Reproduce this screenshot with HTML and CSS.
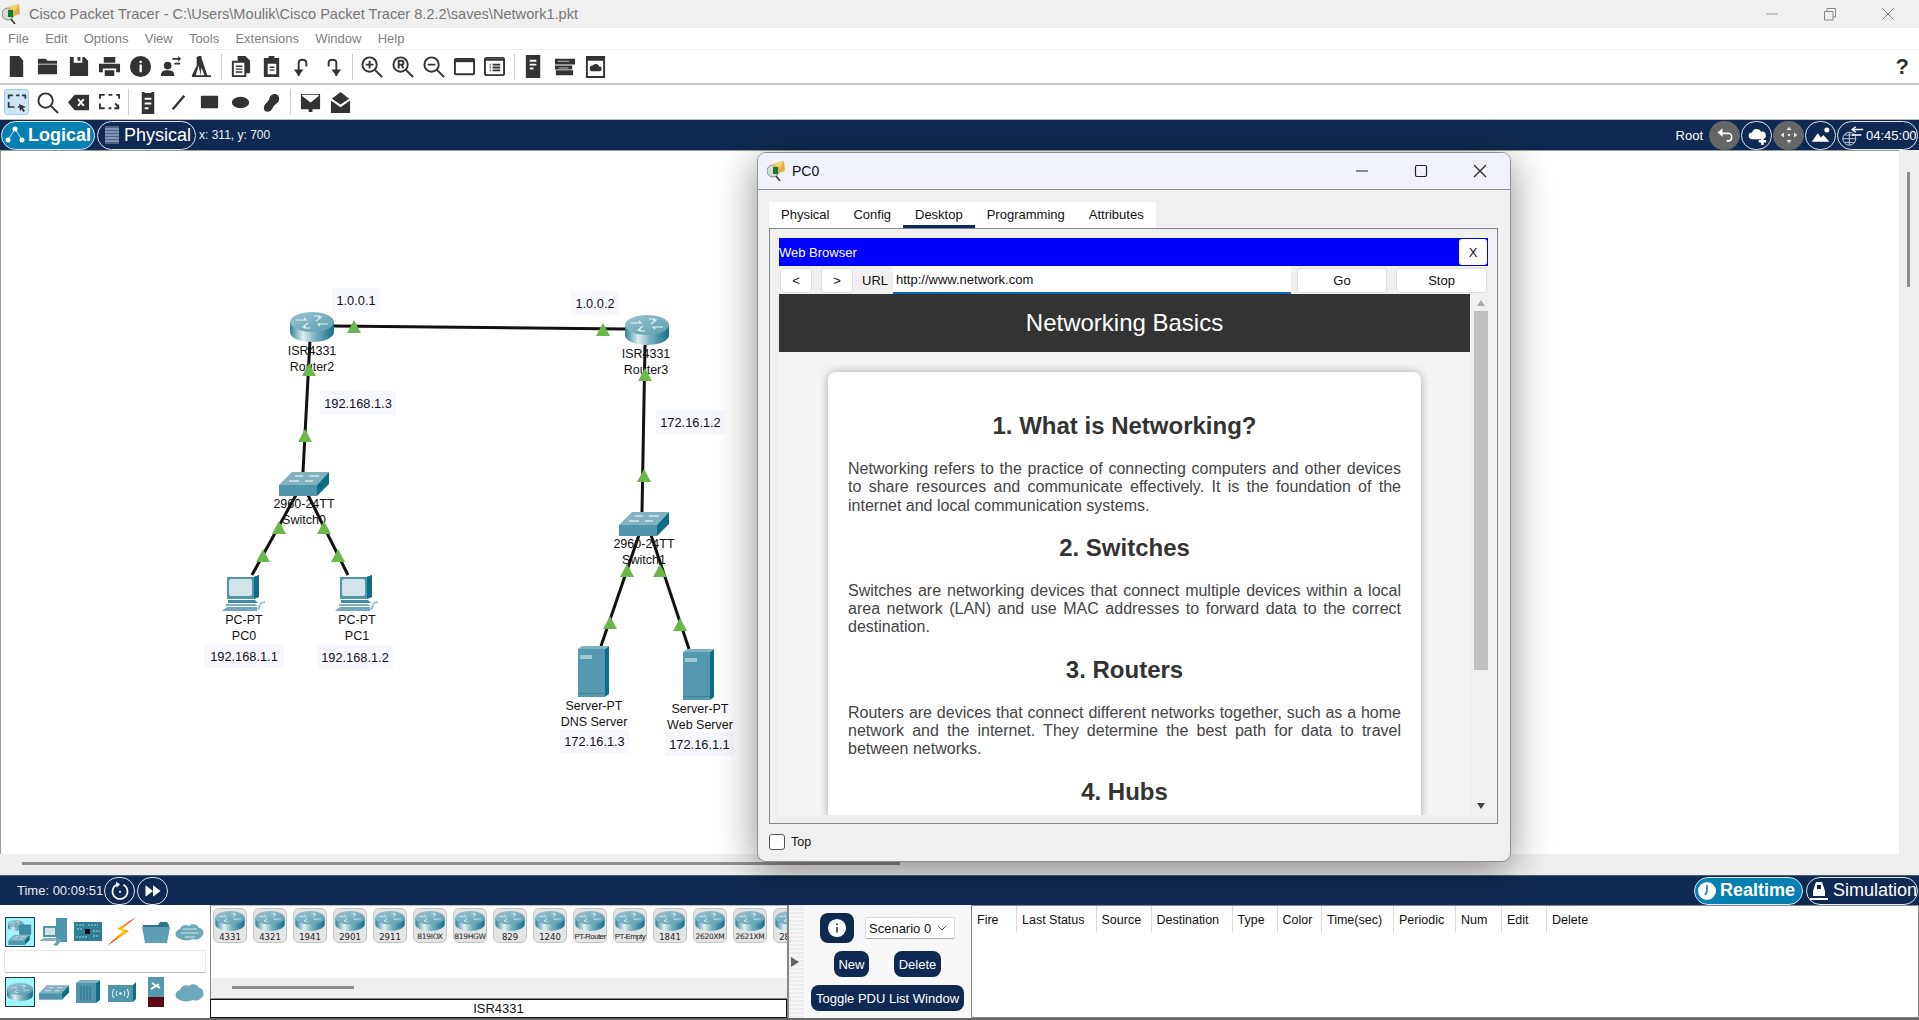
FILE: index.html
```html
<!DOCTYPE html>
<html lang="en">
<head>
<meta charset="utf-8">
<title>Cisco Packet Tracer</title>
<link rel="stylesheet" href="styles.css">
</head>
<body>
<svg class="defs" aria-hidden="true">
  <defs>
    <linearGradient id="gCyl" x1="0" x2="1" y1="0" y2="0">
      <stop offset="0" stop-color="#2f8197"/><stop offset=".3" stop-color="#dfeef1"/><stop offset=".55" stop-color="#7fb3c2"/><stop offset="1" stop-color="#146f8a"/>
    </linearGradient>
    <linearGradient id="gTop" x1="0" x2="1" y1="0" y2="1">
      <stop offset="0" stop-color="#9cc4d0"/><stop offset="1" stop-color="#5a9db1"/>
    </linearGradient>
    <radialGradient id="gBolt"><stop offset="0" stop-color="#ffe000"/><stop offset=".6" stop-color="#ff7a00"/><stop offset="1" stop-color="#e81c00"/></radialGradient>
    <symbol id="router" viewBox="0 0 44 30">
      <path d="M0 10V20C0 26 10 30 22 30S44 26 44 20V10Z" fill="url(#gCyl)"/>
      <ellipse cx="22" cy="10" rx="22" ry="10" fill="url(#gTop)"/>
      <path d="M6 8h10l-2-2M38 12H28l2 2M26 9l5-4h-3M18 11l-5 4h3M24 4l6 0M14 16l6 0" fill="none" stroke="#e6f1f4" stroke-width="1.100"/>
    </symbol>
    <symbol id="switch" viewBox="0 0 50 24">
      <polygon points="0,13 13,0 50,0 38,13" fill="#82b2c2"/>
      <rect x="0" y="13" width="38" height="11" fill="#4f96ad"/>
      <polygon points="38,13 50,0 50,12 38,24" fill="#0f6d88"/>
      <path d="M16 4h8M30 4h10M10 9h10M26 9h8" stroke="#fff" stroke-width="1"/>
    </symbol>
    <symbol id="pc" viewBox="0 0 44 36">
      <polygon points="5,2 32,2 37,0 37,22 31,24 5,24" fill="#4f96ad"/>
      <polygon points="32,2 37,0 37,22 32,24" fill="#0f6d88"/>
      <rect x="7" y="4" width="23" height="17" rx="2" fill="#d3e3ea"/>
      <polygon points="6,25 33,25 36,28 6,28" fill="#3f8aa2"/>
      <polygon points="4,29 33,29 36,31 4,31" fill="#7fb1c2"/>
      <polygon points="0,36 5,32 35,32 35,36" fill="#6ea8bb"/>
      <path d="M36 35l3-7 4-1" fill="none" stroke="#9fc4d0" stroke-width="2"/>
    </symbol>
    <symbol id="server" viewBox="0 0 31 51">
      <rect x="0" y="3" width="27" height="48" fill="#5499b0"/>
      <polygon points="27,3 31,0 31,48 27,51" fill="#0f6d88"/>
      <polygon points="0,3 4,0 31,0 27,3" fill="#7fb1c2"/>
      <rect x="2" y="9" width="12" height="4" fill="#a3c7d3"/>
      <rect x="0" y="47" width="27" height="1" fill="#3f8298"/>
    </symbol>
    <symbol id="tri" viewBox="0 0 14 13"><polygon points="7,0 14,13 0,13" fill="#6ab84a"/></symbol>
    <symbol id="logo" viewBox="0 0 18 20">
      <circle cx="6" cy="10" r="6" fill="#d8d8d8" stroke="#888"/>
      <path d="M9 15l4 5" stroke="#333" stroke-width="1.600"/>
      <path d="M6 3l11-3 1 10-9 3Z" fill="#e2b043"/>
      <path d="M6 3l7 4 4-7Z" fill="#f1d27a"/>
      <rect x="6" y="6" width="5" height="7" fill="#167a2c"/>
    </symbol>
  </defs>
</svg>

<div class="app">
  <header class="titlebar">
    <svg class="title-logo"><use href="#logo"/></svg>
    <span class="title-text">Cisco Packet Tracer - C:\Users\Moulik\Cisco Packet Tracer 8.2.2\saves\Network1.pkt</span>
    <div class="win-ctrls">
      <svg class="wc" viewBox="0 0 14 14"><path d="M1 7h12" stroke="#999" fill="none"/></svg>
      <svg class="wc" viewBox="0 0 14 14"><path d="M1.500 4.500h8.500v8.500h-8.500zM4 4V1.500h8.500V10H10" stroke="#888" fill="none"/></svg>
      <svg class="wc" viewBox="0 0 14 14"><path d="M1 1l12 12M13 1L1 13" stroke="#888" fill="none"/></svg>
    </div>
  </header>

  <nav class="menubar">
    <span>File</span><span>Edit</span><span>Options</span><span>View</span><span>Tools</span><span>Extensions</span><span>Window</span><span>Help</span>
  </nav>

  <div class="toolbar tb-main">
    <span class="tool"><svg viewBox="0 0 24 24"><path d="M5 1h10l4 5v17H5z"/></svg></span>
    <span class="tool"><svg viewBox="0 0 24 24"><path d="M2 4h8l2 2h10v3H2zM2 10h20v10H2z"/></svg></span>
    <span class="tool"><svg viewBox="0 0 24 24"><path d="M3 2h4v6h9V2h2l4 4v16H3zM11 2h3v4h-3z"/></svg></span>
    <span class="tool"><svg viewBox="0 0 24 24"><path d="M6 2h12v6H6zM1 9h22v9h-4v-4H5v4H1zM7 16h10v6H7z"/></svg></span>
    <span class="tool"><svg viewBox="0 0 24 24"><path fill-rule="evenodd" d="M12 1a11 11 0 1 0 0 22a11 11 0 0 0 0-22zM11 6h2.400v2.400H11zM11 10h2.400v8H11z"/></svg></span>
    <span class="tool"><svg viewBox="0 0 24 24"><circle cx="9" cy="11" r="4"/><path d="M2 22c0-5 3-6 7-6s7 1 7 6zM14 3h6V1l3 3-3 3V5h-6zM16 8h6v2h-6z"/></svg></span>
    <span class="tool"><svg viewBox="0 0 24 24"><path d="M9 1h3v2l6 18h4v2H2v-2l5-10V3H6zM9 11l-3 10h5zM15 21l-3-8-1 8z" fill-rule="evenodd"/></svg></span>
    <i class="sep"></i>
    <span class="tool"><svg viewBox="0 0 24 24"><path d="M9 1h8l5 5v13h-4v4H3V6h6zM5 8v13h11V8zM7 11h7v1.500H7zM7 14h7v1.500H7zM7 17h7v1.500H7z" fill-rule="evenodd"/></svg></span>
    <span class="tool"><svg viewBox="0 0 24 24"><path d="M9 1h6v2h5v20H4V3h5zM8 9v11h9V9zM10 12h5v1.500h-5zM10 15h5v1.500h-5z" fill-rule="evenodd"/></svg></span>
    <span class="tool"><svg viewBox="0 0 24 24"><path d="M8 22V8c0-4 8-4 8 0v4" fill="none" stroke="#333" stroke-width="2"/><path d="M3 15h10l-5 7z"/></svg></span>
    <span class="tool"><svg viewBox="0 0 24 24"><path d="M16 22V8c0-4-8-4-8 0v4" fill="none" stroke="#333" stroke-width="2"/><path d="M11 15h10l-5 7z"/></svg></span>
    <i class="sep"></i>
    <span class="tool"><svg viewBox="0 0 24 24" class="ln"><circle cx="10" cy="10" r="7.500"/><path d="M15 15l8 8M6 10h8M10 6v8"/></svg></span>
    <span class="tool"><svg viewBox="0 0 24 24" class="ln"><circle cx="10" cy="10" r="7.500"/><path d="M15 15l8 8M8 14V6h3a2 2 0 0 1 0 4H8M11 10l2 4"/></svg></span>
    <span class="tool"><svg viewBox="0 0 24 24" class="ln"><circle cx="10" cy="10" r="7.500"/><path d="M15 15l8 8M6 10h8"/></svg></span>
    <span class="tool"><svg viewBox="0 0 24 24" class="ln"><rect x="2" y="4" width="20" height="16" rx="1" stroke-width="2"/><path d="M2 6h20" stroke-width="3"/></svg></span>
    <span class="tool"><svg viewBox="0 0 24 24" class="ln"><rect x="2" y="3" width="20" height="18" rx="2"/><path d="M2 5h20M7 10h1M10 10h8M7 13h1M10 13h8M7 16h1M10 16h8"/></svg></span>
    <i class="sep"></i>
    <span class="tool"><svg viewBox="0 0 24 24"><path d="M4 0h15v24H4zM8 5h7v2H8zM8 9h7v2H8zM8 13h4v2H8z" fill-rule="evenodd"/></svg></span>
    <span class="tool"><svg viewBox="0 0 24 24"><path d="M2 4h21v6H2zM2 11h18v4H2zM3 16h18v5H3z"/><path d="M5 6h12v1H5zM6 13h10v1H6z" fill="#bbb"/></svg></span>
    <span class="tool"><svg viewBox="0 0 24 24"><path fill-rule="evenodd" d="M2 1h20v23H2zM4 6v16h16V6zM9 17a3 3 0 0 1 0-6a4 4 0 0 1 7 1a2.500 2.500 0 0 1 0 5z"/></svg></span>
    <span class="help">?</span>
  </div>

  <div class="toolbar tb-sub">
    <span class="tool on"><svg viewBox="0 0 24 24" class="ln"><path d="M2 8V4h5M11 4h4M18 4h4v4M2 12v6h7M13 18h2" stroke-width="2"/></svg><svg class="mini" viewBox="0 0 8 8"><path d="M0 0l7 3-3 1 2 3-2 1-1-3-2 2z"/></svg></span>
    <span class="tool"><svg viewBox="0 0 24 24" class="ln"><circle cx="10" cy="10" r="7.500"/><path d="M15 15l8 8"/></svg></span>
    <span class="tool"><svg viewBox="0 0 24 24"><path fill-rule="evenodd" d="M8 4h15v16H8L1 12z"/><path d="M11.500 8.500l6 7M17.500 8.500l-6 7" stroke="#fff" stroke-width="2"/></svg></span>
    <span class="tool"><svg viewBox="0 0 24 24" class="ln"><path d="M2 8V4h5M11 4h4M19 4h3v4M2 13v5h5M11 18h3M18 13l4 5M21 14v4h-4" stroke-width="2"/></svg></span>
    <i class="sep"></i>
    <span class="tool"><svg viewBox="0 0 24 24"><path d="M5 1h3v1h7V1h3v23H5zM8 7h7v2H8zM8 12h7v2H8zM8 17h4v2H8z" fill-rule="evenodd"/></svg></span>
    <span class="tool"><svg viewBox="0 0 24 24" class="ln"><path d="M6 19L18 5" stroke-width="2.500"/></svg></span>
    <span class="tool"><svg viewBox="0 0 24 24"><rect x="3" y="5" width="18" height="13" rx="1"/></svg></span>
    <span class="tool"><svg viewBox="0 0 24 24"><ellipse cx="12" cy="12" rx="9" ry="6"/></svg></span>
    <span class="tool"><svg viewBox="0 0 24 24"><path d="M4 18c0-5 5-6 6-11 1-5 10-6 10 1 0 5-5 5-7 10-2 5-9 5-9 0z"/></svg></span>
    <i class="sep"></i>
    <span class="tool"><svg viewBox="0 0 24 24"><path fill-rule="evenodd" d="M2 3h20v16h-8v3h-4v-3H2zM3 5l9 7 9-7-1-1H4z"/></svg></span>
    <span class="tool"><svg viewBox="0 0 24 24"><path d="M12 1l9 7-9 6-9-6zM2 10l10 7 10-7v13H2z"/></svg></span>
  </div>

  <div class="navbar">
    <span class="pill pill-on pill-logical">
      <svg class="pill-ic" viewBox="0 0 22 22"><path d="M11 5L4 16M11 5l7 11" stroke="#cfe6f0" fill="none"/><circle cx="11" cy="5" r="2.500" fill="#fff"/><circle cx="4" cy="16" r="2.500" fill="#fff"/><circle cx="18" cy="16" r="2.500" fill="#fff"/></svg>Logical
    </span>
    <span class="pill pill-physical">
      <svg class="pill-ic pill-ic-rack" viewBox="0 0 14 18"><rect x="0" y="0" width="14" height="18" fill="#4d648a"/><path d="M0 3h14M0 6h14M0 9h14M0 12h14M0 15h14" stroke="#b9c6da"/></svg>Physical
    </span>
    <span class="coords">x: 311, y: 700</span>
    <div class="nav-right">
      <span class="root">Root</span>
      <span class="rnd rnd-grey"><svg viewBox="0 0 24 24"><path d="M9 4L3 9l6 5v-3h8c3 0 3 7-1 7h-2v2h3c5 0 6-11-1-11H9z" fill="#fff"/></svg></span>
      <span class="rnd"><svg viewBox="0 0 24 24"><path d="M6 17a4 4 0 0 1 0-8a6 6 0 0 1 11-1a4.500 4.500 0 0 1 2 9zM17 15h3v3h3v3h-3v3h-3v-3h-3v-3h3z" fill="#fff"/></svg></span>
      <span class="rnd rnd-grey"><svg viewBox="0 0 24 24"><path d="M12 2l3 4H9zM12 22l-3-4h6zM2 12l4-3v6zM22 12l-4 3V9z" fill="#e8e8e8"/><circle cx="12" cy="12" r="1.500" fill="#e8e8e8"/></svg></span>
      <span class="rnd"><svg viewBox="0 0 24 24"><path d="M1 20l7-10 4 5 3-3 7 8z" fill="#fff"/><circle cx="19" cy="6" r="3" fill="#fff"/></svg></span>
      <span class="rnd rnd-clock"><svg viewBox="0 0 26 26"><circle cx="9" cy="17" r="7" fill="none" stroke="#cdd6e4"/><path d="M2 17h14M9 10v14M4 13h10M4 21h10" stroke="#cdd6e4" fill="none"/><path d="M12 7h12M16 4l-4 3 4 3M12 13h10" stroke="#fff" stroke-width="1.500" fill="none"/></svg>04:45:00</span>
    </div>
  </div>

  <main class="canvas-row">
    <div class="canvas">
      <svg class="links" viewBox="0 150 1899 704">
        <g class="wires">
          <path d="M333 326L625 329"/>
          <path d="M310 340L303 472"/>
          <path d="M645 345L642 512"/>
          <path d="M296 495L252 575"/>
          <path d="M308 495L348 575"/>
          <path d="M639 535L601 646"/>
          <path d="M651 535L689 649"/>
        </g>
        <use href="#router" x="290" y="312" width="44" height="30"/>
        <use href="#router" x="625" y="315" width="44" height="30"/>
        <use href="#switch" x="279" y="472" width="50" height="24"/>
        <use href="#switch" x="619" y="512" width="50" height="24"/>
        <use href="#pc" x="222" y="575" width="44" height="36"/>
        <use href="#pc" x="335" y="575" width="44" height="36"/>
        <use href="#server" x="578" y="646" width="31" height="51"/>
        <use href="#server" x="683" y="649" width="31" height="51"/>
      </svg>
      <div class="lbl l-r2">ISR4331<br>Router2</div>
      <div class="lbl l-r3">ISR4331<br>Router3</div>
      <div class="lbl l-s0">2960-24TT<br>Switch0</div>
      <div class="lbl l-s1">2960-24TT<br>Switch1</div>
      <div class="lbl l-pc0">PC-PT<br>PC0</div>
      <div class="lbl l-pc1">PC-PT<br>PC1</div>
      <div class="lbl l-dns">Server-PT<br>DNS Server</div>
      <div class="lbl l-web">Server-PT<br>Web Server</div>
      <div class="ip ip1">1.0.0.1</div>
      <div class="ip ip2">1.0.0.2</div>
      <div class="ip ip3">192.168.1.3</div>
      <div class="ip ip4">172.16.1.2</div>
      <div class="ip ip5">192.168.1.1</div>
      <div class="ip ip6">192.168.1.2</div>
      <div class="ip ip7">172.16.1.3</div>
      <div class="ip ip8">172.16.1.1</div>
      <svg class="links links-top" viewBox="0 150 1899 704">
        <use href="#tri" x="347" y="320" width="14" height="13"/>
        <use href="#tri" x="596" y="323" width="14" height="13"/>
        <use href="#tri" x="302" y="363" width="14" height="13"/>
        <use href="#tri" x="298" y="429" width="14" height="13"/>
        <use href="#tri" x="638" y="368" width="14" height="13"/>
        <use href="#tri" x="637" y="469" width="14" height="13"/>
        <use href="#tri" x="272" y="521" width="14" height="13"/>
        <use href="#tri" x="317" y="521" width="14" height="13"/>
        <use href="#tri" x="256" y="549" width="14" height="13"/>
        <use href="#tri" x="331" y="549" width="14" height="13"/>
        <use href="#tri" x="620" y="564" width="14" height="13"/>
        <use href="#tri" x="653" y="564" width="14" height="13"/>
        <use href="#tri" x="603" y="616" width="14" height="13"/>
        <use href="#tri" x="673" y="618" width="14" height="13"/>
      </svg>
    </div>
    <div class="vscroll"><i></i></div>
  </main>
  <div class="hscroll"><i></i></div>

  <div class="timebar">
    <span class="time">Time: 00:09:51</span>
    <span class="rnd rnd-time"><svg viewBox="0 0 24 24"><path d="M16 4.500A9 9 0 1 1 8 4.500" fill="none" stroke="#fff" stroke-width="2"/><path d="M7 1l5 3-4 4z" fill="#fff"/><circle cx="12" cy="13" r="1.300" fill="#fff"/></svg></span>
    <span class="rnd rnd-time"><svg viewBox="0 0 24 24"><path d="M3 5l9 7-9 7zM12 5l9 7-9 7z" fill="#fff"/></svg></span>
    <div class="mode">
      <span class="pill pill-on pill-rt"><svg viewBox="0 0 22 22" class="pill-ic"><circle cx="11" cy="11" r="9" fill="#fff"/><path d="M11 5v7l-2 3" stroke="#0580b0" stroke-width="1.500" fill="none"/></svg>Realtime</span>
      <span class="pill pill-sim"><svg viewBox="0 0 22 22" class="pill-ic"><path d="M8 2h6l3 9v5H5v-5zM9 5v4h4V5zM2 18h18v2H2z" fill="#fff" fill-rule="evenodd"/></svg>Simulation</span>
    </div>
  </div>

  <section class="dock">
    <div class="cats">
      <div class="cat-row">
        <span class="cat cat-on"><svg viewBox="0 0 30 30"><use href="#router" x="2" y="2" width="17" height="12"/><rect x="14" y="7" width="13" height="11" fill="#3e8ba3"/><use href="#switch" x="2" y="18" width="24" height="11"/></svg></span>
        <span class="cat"><svg viewBox="0 0 30 30"><rect x="17" y="1" width="11" height="24" fill="#4f96ad"/><rect x="4" y="9" width="14" height="11" fill="#4f96ad"/><rect x="6" y="11" width="10" height="7" fill="#d3e3ea"/><polygon points="0,24 5,21 20,21 16,24" fill="#7fb1c2"/><path d="M14 28l6-6 3 1-5 6z" fill="#6ea8bb"/></svg></span>
        <span class="cat"><svg viewBox="0 0 30 30"><rect x="1" y="5" width="28" height="19" fill="#2e7f96"/><rect x="12" y="12" width="5" height="5" fill="#111"/><path d="M3 8h8M15 8h10M3 20h12M20 14h7M4 12h5M20 19h5" stroke="#b7d3dc" stroke-dasharray="2 1"/></svg></span>
        <span class="cat"><svg viewBox="0 0 30 30"><polygon points="29,0 10,12 16,14 0,29 22,14 15,12" fill="url(#gBolt)"/></svg></span>
        <span class="cat"><svg viewBox="0 0 30 30"><path d="M2 8h15l2-3 7 0 2 3v3H2z" fill="#2a7890"/><path d="M1 10h28l-3 16H4z" fill="#5c9eb3"/></svg></span>
        <span class="cat"><svg viewBox="0 0 30 30"><path d="M3 21c-4-2-3-8 2-9 1-4 6-5 9-3 3-3 9-2 10 2 5 0 6 7 2 9-2 3-6 3-8 2-4 2-11 2-15-1z" fill="#6ea8bb"/><path d="M8 12h14M6 16h18M10 20h10" stroke="#d6e6eb"/></svg></span>
      </div>
      <div class="search"></div>
      <div class="cat-row">
        <span class="cat cat-on"><svg viewBox="0 0 30 30"><use href="#router" x="1" y="5" width="28" height="20"/></svg></span>
        <span class="cat"><svg viewBox="0 0 30 30"><use href="#switch" x="0" y="8" width="30" height="15"/></svg></span>
        <span class="cat"><svg viewBox="0 0 30 30"><rect x="3" y="6" width="20" height="20" fill="#4f96ad"/><polygon points="23,6 27,3 27,23 23,26" fill="#0f6d88"/><polygon points="3,6 7,3 27,3 23,6" fill="#7fb1c2"/><path d="M8 9v14M11 9v14M14 9v14M17 9v14" stroke="#316f85"/></svg></span>
        <span class="cat"><svg viewBox="0 0 30 30"><rect x="1" y="8" width="25" height="17" fill="#4f96ad"/><polygon points="26,8 29,5 29,22 26,25" fill="#0f6d88"/><path d="M7 12c-2 3-2 6 0 9M20 12c2 3 2 6 0 9M10 14c-1 2-1 3 0 5M17 14c1 2 1 3 0 5" stroke="#fff" fill="none"/><circle cx="13.500" cy="16.500" r="1.300" fill="#fff"/></svg></span>
        <span class="cat"><svg viewBox="0 0 30 30"><rect x="7" y="0" width="16" height="30" fill="#5499b0"/><rect x="7" y="20" width="16" height="10" fill="#5a0a10"/><path d="M11 6l8 5M10 12l8-5" stroke="#fff" stroke-width="2"/></svg></span>
        <span class="cat"><svg viewBox="0 0 30 30"><path d="M3 22c-4-2-3-8 2-9 1-4 6-6 9-4 3-3 9-2 10 2 5 0 6 8 2 10-2 3-6 3-8 2-4 2-11 2-15-1z" fill="#6ea8bb"/></svg></span>
      </div>
    </div>

    <div class="devices">
      <div class="tiles">
        <div class="tile"><svg><use href="#router"/></svg>4331</div>
        <div class="tile"><svg><use href="#router"/></svg>4321</div>
        <div class="tile"><svg><use href="#router"/></svg>1941</div>
        <div class="tile"><svg><use href="#router"/></svg>2901</div>
        <div class="tile"><svg><use href="#router"/></svg>2911</div>
        <div class="tile tile-mid"><svg><use href="#router"/></svg>819IOX</div>
        <div class="tile tile-mid"><svg><use href="#router"/></svg>819HGW</div>
        <div class="tile"><svg><use href="#router"/></svg>829</div>
        <div class="tile"><svg><use href="#router"/></svg>1240</div>
        <div class="tile tile-tight"><svg><use href="#router"/></svg>PT-Router</div>
        <div class="tile tile-tight"><svg><use href="#router"/></svg>PT-Empty</div>
        <div class="tile"><svg><use href="#router"/></svg>1841</div>
        <div class="tile tile-mid"><svg><use href="#router"/></svg>2620XM</div>
        <div class="tile tile-mid"><svg><use href="#router"/></svg>2621XM</div>
        <div class="tile"><svg><use href="#router"/></svg>2811</div>
      </div>
      <div class="dev-scroll"><i></i></div>
      <div class="dev-name">ISR4331</div>
    </div>

    <div class="collapse"><svg viewBox="0 0 8 10"><path d="M0 0l8 5-8 5z" fill="#666"/></svg></div>

    <div class="pdu-ctrl">
      <div class="pdu-row">
        <span class="btn btn-info"><svg viewBox="0 0 22 22"><circle cx="11" cy="11" r="10" fill="#fff"/><path d="M10 6h2v2h-2zM10 10h2v6h-2z" fill="#555"/></svg></span>
        <span class="select">Scenario 0<svg viewBox="0 0 10 6"><path d="M1 1l4 4 4-4" fill="none" stroke="#555"/></svg></span>
      </div>
      <div class="pdu-row pdu-row2">
        <span class="btn btn-new">New</span>
        <span class="btn btn-del">Delete</span>
      </div>
      <span class="btn btn-toggle">Toggle PDU List Window</span>
    </div>

    <div class="pdu-table">
      <span class="th th1">Fire</span><span class="th th2">Last Status</span><span class="th th3">Source</span><span class="th th4">Destination</span><span class="th th5">Type</span><span class="th th6">Color</span><span class="th th7">Time(sec)</span><span class="th th8">Periodic</span><span class="th th9">Num</span><span class="th th10">Edit</span><span class="th th11">Delete</span>
    </div>
  </section>

  <section class="window">
    <div class="w-title">
      <svg class="w-logo"><use href="#logo"/></svg>
      <span class="w-name">PC0</span>
      <div class="w-ctrls">
        <svg viewBox="0 0 14 14"><path d="M1 7h12" stroke="#222" fill="none" stroke-width="1.200"/></svg>
        <svg viewBox="0 0 14 14"><rect x="1.500" y="1.500" width="11" height="11" rx="1.500" stroke="#222" fill="none" stroke-width="1.200"/></svg>
        <svg viewBox="0 0 14 14"><path d="M1 1l12 12M13 1L1 13" stroke="#222" fill="none" stroke-width="1.200"/></svg>
      </div>
    </div>
    <div class="w-body">
      <div class="tabs">
        <span class="tab">Physical</span><span class="tab">Config</span><span class="tab tab-on">Desktop</span><span class="tab">Programming</span><span class="tab">Attributes</span>
      </div>
      <div class="panel">
        <div class="browser-head"><span>Web Browser</span><span class="xbtn">X</span></div>
        <div class="url-row">
          <span class="ubtn ubtn-nav">&lt;</span>
          <span class="ubtn ubtn-nav">&gt;</span>
          <span class="url-lbl">URL</span>
          <span class="url-input">http://www.network.com</span>
          <span class="ubtn ubtn-go">Go</span>
          <span class="ubtn ubtn-stop">Stop</span>
        </div>
        <div class="page-wrap">
          <div class="page">
            <div class="page-head">Networking Basics</div>
            <article class="card">
              <h2>1. What is Networking?</h2>
              <p>Networking refers to the practice of connecting computers and other devices to share resources and communicate effectively. It is the foundation of the internet and local communication systems.</p>
              <h2>2. Switches</h2>
              <p>Switches are networking devices that connect multiple devices within a local area network (LAN) and use MAC addresses to forward data to the correct destination.</p>
              <h2>3. Routers</h2>
              <p>Routers are devices that connect different networks together, such as a home network and the internet. They determine the best path for data to travel between networks.</p>
              <h2>4. Hubs</h2>
            </article>
          </div>
          <div class="page-scroll">
            <svg viewBox="0 0 8 6"><path d="M4 0l4 6H0z" fill="#aaa"/></svg>
            <i></i>
            <svg viewBox="0 0 8 6"><path d="M0 0h8L4 6z" fill="#444"/></svg>
          </div>
        </div>
      </div>
      <div class="w-foot"><span class="check"></span>Top</div>
    </div>
  </section>
</div>
</body>
</html>
```
FILE: styles.css
```css
* { box-sizing: border-box; }
html, body { margin: 0; padding: 0; height: 100%; overflow: hidden; background: #fff; }
body { font-family: "Liberation Sans", Arial, sans-serif; font-size: 13px; color: #111; }
.defs { position: absolute; width: 0; height: 0; }

.app { position: relative; width: 1919px; height: 1020px; display: flex; flex-direction: column; overflow: hidden; background: #fff; }

/* title bar */
.titlebar { height: 28px; background: #f0f0f0; display: flex; align-items: center; padding-left: 2px; flex: none; }
.title-logo { width: 18px; height: 20px; margin-right: 9px; }
.title-text { font-size: 14.600px; color: #777; white-space: nowrap; }
.win-ctrls { margin-left: auto; display: flex; gap: 44px; padding-right: 24px; }
.wc { width: 14px; height: 14px; }

/* menu */
.menubar { height: 22px; background: #fff; display: flex; align-items: center; gap: 16.200px; padding-left: 8px; border-bottom: 1px solid #eee; color: #808080; flex: none; }

/* toolbars */
.toolbar { display: flex; align-items: center; padding-left: 1.600px; background: #fff; flex: none; }
.tb-main { height: 35px; border-bottom: 2px solid #c8c8c8; }
.tb-sub { height: 35px; border-bottom: 1px solid #bbb; }
.tool { width: 30.800px; height: 26px; display: flex; align-items: center; justify-content: center; position: relative; flex: none; }
.tool svg { width: 23px; height: 23px; fill: #333; }
.tool svg.ln { fill: none; stroke: #333; stroke-width: 2; }
.tool.on { background: #cde6f7; border: 1px solid #9fd0f0; border-radius: 3px; width: 25px; margin: 0 2.900px; }
.tool.on svg.ln { width: 20px; height: 20px; }
.tool svg.mini { position: absolute; right: 1px; bottom: 2px; width: 8px; height: 8px; }
.sep { width: 8px; height: 26px; flex: none; background: linear-gradient(#ccc, #ccc) center / 1px 100% no-repeat; }
.help { margin-left: auto; margin-right: 10px; font-size: 22px; font-weight: bold; color: #333; }

/* nav bars */
.navbar, .timebar { background: #0f2a52; display: flex; align-items: center; flex: none; color: #fff; }
.navbar { height: 30px; }
.pill { height: 29px; border: 1px solid #dfe6ef; border-radius: 15px; display: flex; align-items: center; color: #fff; font-size: 18px; flex: none; white-space: nowrap; }
.pill-on { background: #0580b0; font-weight: bold; }
.pill-logical { width: 94px; margin-left: 1px; }
.pill-physical { width: 99px; margin-left: 2px; }
.pill-ic { width: 22px; height: 22px; flex: none; margin: 0 2px; }
.pill-ic-rack { width: 14px; height: 18px; margin: 0 5px 0 7px; }
.coords { font-size: 12px; margin-left: 3px; color: #eef2f7; }
.nav-right { margin-left: auto; display: flex; align-items: center; gap: 1px; }
.root { font-size: 13px; margin-right: 5px; }
.rnd { width: 31px; height: 29px; border: 1px solid #dfe6ef; border-radius: 15px; display: flex; align-items: center; justify-content: center; flex: none; color: #fff; }
.rnd svg { width: 20px; height: 20px; }
.rnd-grey { background: #666; border-color: #666; }
.rnd-clock { width: 81px; font-size: 13px; justify-content: flex-start; padding-left: 3px; margin-right: 1px; white-space: nowrap; }
.rnd-clock svg { width: 24px; height: 24px; flex: none; margin-right: 1px; }

/* canvas */
.canvas-row { height: 704px; display: flex; flex: none; }
.canvas { position: relative; flex: 1; background: #fff; border-left: 1px solid #999; border-top: 1px solid #999; }
.links { position: absolute; left: -1px; top: -1px; width: 1899px; height: 704px; }
.links-top { pointer-events: none; }
.wires path { stroke: #111; stroke-width: 3; fill: none; }
.lbl { position: absolute; width: 120px; text-align: center; font-size: 12.500px; line-height: 16px; color: #111; }
.l-r2 { left: 251px; top: 192px; }
.l-r3 { left: 585px; top: 195px; }
.l-s0 { left: 243px; top: 345px; }
.l-s1 { left: 583px; top: 385px; }
.l-pc0 { left: 183px; top: 461px; }
.l-pc1 { left: 296px; top: 461px; }
.l-dns { left: 533px; top: 547px; }
.l-web { left: 639px; top: 550px; }
.ip { position: absolute; height: 24px; display: flex; align-items: center; justify-content: center; background: #f7f8fe; font-size: 12.800px; color: #111; }
.ip1 { left: 331px; top: 137px; width: 48px; }
.ip2 { left: 570px; top: 140px; width: 48px; }
.ip3 { left: 319px; top: 240px; width: 76px; }
.ip4 { left: 655px; top: 259px; width: 69px; }
.ip5 { left: 203px; top: 493px; width: 80px; }
.ip6 { left: 316px; top: 494px; width: 76px; }
.ip7 { left: 559px; top: 578px; width: 69px; }
.ip8 { left: 664px; top: 581px; width: 69px; }
.vscroll { width: 20px; background: #efefef; flex: none; padding: 22px 0 0 8px; }
.vscroll i { display: block; width: 3px; height: 115px; background: #8f8f8f; }
.hscroll { height: 21px; background: #efefef; flex: none; padding: 8px 0 0 22px; }
.hscroll i { display: block; width: 878px; height: 3px; background: #8f8f8f; }

/* time bar */
.timebar { height: 30px; padding-left: 17px; border-top: 1px solid #4a5a75; }
.time { font-size: 13px; color: #e9edf3; margin-right: 2px; width: 85px; white-space: nowrap; flex: none; }
.rnd-time { margin-right: 2px; width: 31px; height: 28px; }
.mode { margin-left: auto; display: flex; gap: 3px; padding-right: 1px; }
.pill-rt { width: 109px; height: 28px; font-size: 18px; padding-left: 1px; }
.pill-rt .pill-ic { margin: 0 2px 0 0; }
.pill-sim { width: 112px; height: 28px; font-size: 18px; padding-left: 1px; }
.pill-sim .pill-ic { margin: 0 3px 0 0; }

/* dock */
.dock { height: 115px; display: flex; flex: none; background: #fff; border-bottom: 2px solid #666; }
.cats { width: 210px; flex: none; padding: 12px 4px 0 5px; }
.cat-row { display: flex; gap: 4px; }
.cat { width: 30px; height: 30px; flex: none; display: block; }
.cat svg { width: 100%; height: 100%; display: block; }
.cat-on { background: #9ff5fb; border: 1px solid #1b3b4a; }
.search { height: 23px; width: 202px; margin: 3px 0 4px -1px; background: #fff; border: 1px solid #e6e6e6; border-bottom-color: #bbb; border-radius: 2px; }
.devices { width: 577px; flex: none; border-left: 1px solid #888; border-top: 1px solid #bbb; display: flex; flex-direction: column; }
.tiles { height: 72px; display: flex; gap: 6px; padding: 2px 0 0 2px; overflow: hidden; }
.tile { width: 34px; height: 35px; flex: none; background: #e4e4e4; border: 1px solid #c4c4c4; border-radius: 6px; text-align: center; font-size: 8.500px; line-height: 10px; color: #222; white-space: nowrap; padding-top: 2px; font-family: "DejaVu Sans", sans-serif; }
.tile svg { display: block; width: 30px; height: 20px; margin: 0 auto 1px; }
.tile-mid { font-size: 7.500px; letter-spacing: -.3px; }
.tile-tight { font-size: 8px; letter-spacing: -.6px; font-family: "Liberation Sans", sans-serif; }
.dev-scroll { height: 21px; background: #efefef; padding: 8px 0 0 21px; border-bottom: 1px solid #888; }
.dev-scroll i { display: block; width: 122px; height: 3px; background: #8f8f8f; }
.dev-name { flex: 1; border: 1px solid #111; margin-left: -1px; display: flex; align-items: center; justify-content: center; font-size: 13px; color: #111; }
.collapse { width: 17px; flex: none; border-left: 2px solid #888; background: repeating-linear-gradient(0deg, #ececec 0 2px, #f6f6f6 2px 4px); display: flex; align-items: center; padding-left: 2px; }
.collapse svg { width: 8px; height: 10px; }
.pdu-ctrl { width: 167px; flex: none; background: #f8f8f8; padding: 8px 7px 0 7px; display: flex; flex-direction: column; }
.pdu-row { display: flex; justify-content: center; align-items: center; gap: 11px; height: 30px; }
.pdu-row2 { gap: 25px; margin-top: 8px; height: 26px; margin-bottom: 8px; }
.btn { background: #0f2a52; color: #fff; border-radius: 8px; display: flex; align-items: center; justify-content: center; font-size: 13px; flex: none; }
.btn-info { width: 34px; height: 30px; }
.btn-info svg { width: 20px; height: 20px; }
.btn-new { width: 35px; height: 26px; }
.btn-del { width: 47px; height: 26px; }
.btn-toggle { width: 153px; height: 26px; }
.select { width: 90px; height: 22px; background: #fff; border: 1px solid #ddd; border-bottom-color: #aaa; border-radius: 2px; display: flex; align-items: center; justify-content: space-between; padding: 0 7px 0 3px; font-size: 13px; color: #111; }
.select svg { width: 10px; height: 6px; }
.pdu-table { flex: 1; border: 1px solid #888; display: flex; align-items: flex-start; background: #fff; }
.th { height: 27px; flex: none; border-right: 1px solid #ddd; padding-left: 5px; font-size: 12.500px; line-height: 29px; white-space: nowrap; color: #111; }
.th1 { width: 45px; } .th2 { width: 79.500px; } .th3 { width: 55px; } .th4 { width: 81px; } .th5 { width: 45px; } .th6 { width: 44.500px; } .th7 { width: 72px; } .th8 { width: 62px; } .th9 { width: 46px; } .th10 { width: 45px; } .th11 { border-right: 0; }

/* floating PC window */
.window { position: absolute; left: 757px; top: 152px; width: 754px; height: 710px; background: #f0f0f0; border: 1px solid #8a8f98; border-radius: 9px; box-shadow: 0 8px 40px rgba(0,0,0,.45); overflow: hidden; display: flex; flex-direction: column; z-index: 5; }
.w-title { height: 37px; flex: none; background: #eff3f9; border-bottom: 1px solid #8a8f98; display: flex; align-items: center; padding-left: 9px; }
.w-logo { width: 18px; height: 20px; margin-right: 7px; }
.w-name { font-size: 14px; color: #111; }
.w-ctrls { margin-left: auto; display: flex; gap: 45px; padding-right: 23px; }
.w-ctrls svg { width: 14px; height: 14px; }
.w-body { flex: 1; padding: 12px 12px 0 11px; display: flex; flex-direction: column; }
.tabs { display: flex; height: 26px; flex: none; align-self: flex-start; background: #fff; }
.tab { padding: 0 12px; font-size: 13px; line-height: 26px; height: 26px; color: #111; white-space: nowrap; }
.tab-on { border-bottom: 3px solid #0f2a52; }
.panel { flex: none; height: 596px; width: 729px; border: 1px solid #7f8790; padding: 9px 9px 0; display: flex; flex-direction: column; }
.browser-head { height: 28px; background: #0000ff; color: #fff; font-size: 13px; display: flex; align-items: center; justify-content: space-between; padding-right: 1px; flex: none; }
.xbtn { width: 28px; height: 26px; background: #fff; color: #111; border-radius: 3px; display: flex; align-items: center; justify-content: center; }
.url-row { height: 28px; display: flex; align-items: center; flex: none; padding-left: 1px; font-size: 13px; }
.ubtn { background: #fff; border: 1px solid #ddd; border-radius: 4px; height: 25px; display: flex; align-items: center; justify-content: center; font-size: 13px; color: #111; flex: none; }
.ubtn-nav { width: 32px; margin-right: 9px; }
.url-lbl { width: 31px; color: #111; font-size: 13px; flex: none; }
.url-input { width: 398px; height: 28px; background: #fff; border-bottom: 2px solid #0a66c2; padding-left: 3px; line-height: 27px; font-size: 13px; flex: none; margin-right: 6px; }
.ubtn-go { width: 90px; margin-right: 9px; }
.ubtn-stop { width: 91px; }
.page-wrap { flex: 1; display: flex; min-height: 0; height: 521px; }
.page { width: 691px; height: 521px; overflow: hidden; background: #f4f4f4; flex: none; }
.page-head { height: 58px; background: #333; color: #fff; font-size: 24px; display: flex; align-items: center; justify-content: center; }
.card { margin: 20px 49px 0; background: #fff; border-radius: 8px; box-shadow: 0 0 10px rgba(0,0,0,.3); padding: 40px 20px 20px; color: #333; }
.card h2 { margin: 0 0 20px; font-size: 24px; line-height: 28px; font-weight: bold; text-align: center; color: #333; }
.card p { margin: 0 0 19px; font-size: 16px; line-height: 18.300px; text-align: justify; color: #444; }
.page-scroll { width: 16px; margin-left: 3px; display: flex; flex-direction: column; align-items: center; flex: none; padding-top: 6px; }
.page-scroll svg { width: 8px; height: 6px; flex: none; }
.page-scroll i { display: block; width: 14px; height: 359px; background: #c0c0c0; margin: 5px 0 133px; flex: none; }
.w-foot { flex: 1; display: flex; align-items: center; gap: 6px; font-size: 12.500px; color: #111; padding-bottom: 2px; }
.check { width: 16px; height: 16px; border: 1px solid #555; border-radius: 3px; background: #fff; flex: none; }
```
